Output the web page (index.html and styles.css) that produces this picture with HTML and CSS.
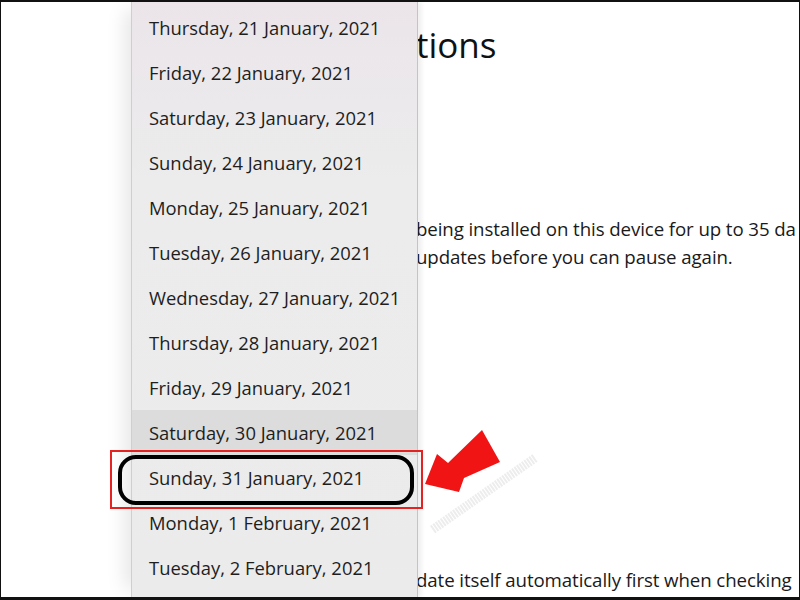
FILE: index.html
```html
<!DOCTYPE html>
<html lang="en">
<head>
<meta charset="utf-8">
<title>Advanced options</title>
<link rel="stylesheet" href="styles.css">
</head>
<body>
<div class="frame">
  <div class="page">
    <div class="sidebar"></div>
    <main class="content">
      <h1 class="title">tions</h1>
      <p class="desc">being installed on this device for up to 35 da<br>updates before you can pause again.</p>
      <p class="desc bottom">date itself automatically first when checking</p>
    </main>
  </div>

  <ul class="menu">
    <li class="item">Thursday, 21 January, 2021</li>
    <li class="item">Friday, 22 January, 2021</li>
    <li class="item">Saturday, 23 January, 2021</li>
    <li class="item">Sunday, 24 January, 2021</li>
    <li class="item">Monday, 25 January, 2021</li>
    <li class="item">Tuesday, 26 January, 2021</li>
    <li class="item">Wednesday, 27 January, 2021</li>
    <li class="item">Thursday, 28 January, 2021</li>
    <li class="item">Friday, 29 January, 2021</li>
    <li class="item hover">Saturday, 30 January, 2021</li>
    <li class="item">Sunday, 31 January, 2021</li>
    <li class="item">Monday, 1 February, 2021</li>
    <li class="item">Tuesday, 2 February, 2021</li>
  </ul>

  <div class="mark-red"></div>
  <div class="mark-black"></div>

  <svg class="arrow" width="140" height="130" viewBox="400 420 140 130" xmlns="http://www.w3.org/2000/svg">
    <line x1="535" y1="458" x2="432" y2="530" stroke="#ededed" stroke-width="9" stroke-dasharray="2 1"/>
    <polygon points="425,484 437,454 448,463 482,430 500,462 464,478 459,492" fill="#f01414"/>
  </svg>
</div>
</body>
</html>
```

FILE: styles.css
```css
* { box-sizing: border-box; }
html, body { margin: 0; padding: 0; background: #fff; }
.frame {
  position: relative;
  width: 800px;
  height: 600px;
  overflow: hidden;
  border-top: 2px solid #111;
  border-left: 1px solid #111;
  border-right: 1px solid #111;
  border-bottom: 3px solid #111;
  background: #fff;
  font-family: "Open Sans", "Noto Sans", sans-serif;
  color: #1c1c1c;
}
.page {
  display: grid;
  grid-template-columns: 415px 1fr;
  height: 100%;
}
.content {
  position: relative;
  white-space: nowrap;
  overflow: hidden;
  display: flex;
  flex-direction: column;
}
.title {
  margin: 18px 0 0 0;
  font-size: 35px;
  font-weight: 400;
  line-height: 50px;
  color: #111;
}
.desc {
  margin: 145px 0 0 0;
  font-size: 18.7px;
  line-height: 28px;
  letter-spacing: -0.1px;
  color: #1a1a1a;
}
.desc.bottom {
  margin-top: auto;
  margin-bottom: 3px;
}
.menu {
  position: absolute;
  left: 130px;
  top: 0;
  bottom: 0;
  width: 287px;
  margin: 0;
  padding: 3px 0 0 0;
  list-style: none;
  background: linear-gradient(#ebe5ea, #ececec 180px, #ebebeb);
  border-left: 1px solid #cfcfcf;
  border-right: 1px solid #c4c4c4;
  box-shadow: -14px 0 18px -8px rgba(0,0,0,0.10), 4px 0 4px rgba(0,0,0,0.06);
}
.item {
  height: 45px;
  line-height: 45px;
  padding-left: 17px;
  font-size: 18.4px;
  color: #1e1e1e;
  white-space: nowrap;
}
.item.hover { background: #dcdcdc; }
.mark-red {
  position: absolute;
  left: 109px;
  top: 448px;
  width: 313px;
  height: 59px;
  border: 2px solid #e52222;
}
.mark-black {
  position: absolute;
  left: 117px;
  top: 453px;
  width: 296px;
  height: 50px;
  border: 4px solid #000;
  border-radius: 18px;
}
.arrow {
  position: absolute;
  left: 399px;
  top: 418px;
}
```
